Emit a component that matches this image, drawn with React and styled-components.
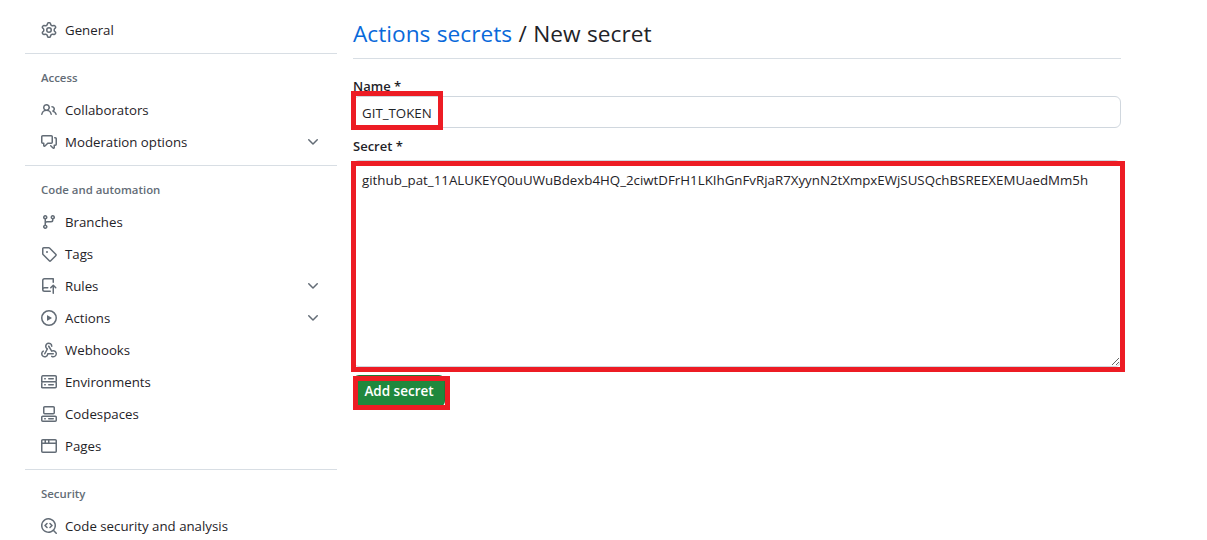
import React from 'react'
import styled, { createGlobalStyle } from 'styled-components'

const FONT = '"Open Sans", "Noto Sans", "Liberation Sans", sans-serif'

const GlobalStyle = createGlobalStyle`
  html, body {
    margin: 0;
    height: 540px;
    overflow: hidden;
    background: #fff;
  }
  body {
    font-family: ${ FONT };
    font-size: 14px;
    color: #1f2328;
  }
`

const Page = styled.div`
  display: grid;
  grid-template-columns: 312px 768px;
  column-gap: 16px;
  padding-left: 25px;
  height: 540px;
  overflow: hidden;
`

const Sidebar = styled.nav`
  display: flex;
  flex-direction: column;
  padding-top: 14px;
`

const NavItem = styled.div`
  display: grid;
  grid-template-columns: 16px 1fr 16px;
  column-gap: 8px;
  align-items: center;
  height: 32px;
  padding: 0 16px;
  flex: none;
  font-size: 13.25px;
  color: #1f2328;
`

const IconSvg = styled.svg`
  display: block;
  fill: #636c76;
`

const Divider = styled.div`
  flex: none;
  height: 1px;
  background: #d8dee4;
  margin: 7px 0 8px;
`

const SectionTitle = styled.div`
  flex: none;
  height: 32px;
  line-height: 32px;
  padding: 0 16px;
  font-size: 11.4px;
  font-weight: 600;
  color: #636c76;
`

const Main = styled.main`
  display: flex;
  flex-direction: column;
`

const Title = styled.h2`
  margin: 0;
  height: 59px;
  box-sizing: border-box;
  padding-top: 16px;
  font-size: 22.7px;
  line-height: 36px;
  font-weight: 400;
  word-spacing: 0.5px;
  border-bottom: 1px solid #d8dee4;
  color: #1f2328;
`

const TitleLink = styled.span`
  color: #0969da;
`

const Label = styled.label`
  display: block;
  font-size: 13px;
  font-weight: 600;
  line-height: 20px;
  color: #1f2328;
`

const NameLabel = styled(Label)`
  margin-top: 17px;
`

const SecretLabel = styled(Label)`
  margin-top: 8px;
  height: 24px;
`

const Annotated = styled.div`
  position: relative;
`

// hand-drawn red boxes that lie over the form
const RedBox = styled.div`
  position: absolute;
  left: ${ ({ $left }) => $left }px;
  top: ${ ({ $top }) => $top }px;
  width: ${ ({ $width }) => $width }px;
  height: ${ ({ $height }) => $height }px;
  box-sizing: border-box;
  border: 5px solid #ed1c24;
  pointer-events: none;
`

const TextInput = styled.input`
  display: block;
  box-sizing: border-box;
  width: 100%;
  height: 32px;
  padding: 1px 8px 0;
  border: 1px solid #d0d7de;
  border-radius: 6px;
  outline: none;
  font-family: ${ FONT };
  font-size: 13.3px;
  color: #1f2328;
  background: #fff;
`

const SecretArea = styled.textarea`
  display: block;
  box-sizing: border-box;
  width: 100%;
  height: 207px;
  padding: 9px 8px;
  margin: 0;
  border: 1px solid #d0d7de;
  border-radius: 6px;
  outline: none;
  font-family: ${ FONT };
  font-size: 13.3px;
  line-height: 20px;
  color: #1f2328;
  background: #fff;
`

const SubmitButton = styled.button`
  display: block;
  margin-top: 8px;
  box-sizing: border-box;
  width: 92px;
  height: 32px;
  padding: 0;
  border: 1px solid rgba(31, 35, 40, 0.15);
  border-radius: 6px;
  background: #1f883d;
  color: #fff;
  font-family: ${ FONT };
  font-size: 13.5px;
  font-weight: 600;
`

// octicons, 16px versions
const paths = {
  gear: 'M8 0a8.2 8.2 0 0 1 .701.031C9.444.095 9.99.645 10.16 1.29l.288 1.107c.018.066.079.158.212.224.231.114.454.243.668.386.123.082.233.09.299.071l1.103-.303c.644-.176 1.392.021 1.82.63.27.385.506.792.704 1.218.315.675.111 1.422-.364 1.891l-.814.806c-.049.048-.098.147-.088.294.016.257.016.515 0 .772-.01.147.038.246.088.294l.814.806c.475.469.679 1.216.364 1.891a7.977 7.977 0 0 1-.704 1.217c-.428.61-1.176.807-1.82.63l-1.102-.302c-.067-.019-.177-.011-.3.071a5.909 5.909 0 0 1-.668.386c-.133.066-.194.158-.211.224l-.29 1.106c-.168.646-.715 1.196-1.458 1.26a8.006 8.006 0 0 1-1.402 0c-.743-.064-1.289-.614-1.458-1.26l-.289-1.106c-.018-.066-.079-.158-.212-.224a5.738 5.738 0 0 1-.668-.386c-.123-.082-.233-.09-.299-.071l-1.103.303c-.644.176-1.392-.021-1.82-.63a8.12 8.12 0 0 1-.704-1.218c-.315-.675-.111-1.422.363-1.891l.815-.806c.05-.048.098-.147.088-.294a6.214 6.214 0 0 1 0-.772c.01-.147-.038-.246-.088-.294l-.815-.806C.635 6.045.431 5.298.746 4.623a7.92 7.92 0 0 1 .704-1.217c.428-.61 1.176-.807 1.82-.63l1.102.302c.067.019.177.011.3-.071.214-.143.437-.272.668-.386.133-.066.194-.158.211-.224l.29-1.106C6.009.645 6.556.095 7.299.03 7.53.01 7.764 0 8 0Zm-.571 1.525c-.036.003-.108.036-.137.146l-.289 1.105c-.147.561-.549.967-.998 1.189-.173.086-.34.183-.5.29-.417.278-.97.423-1.529.27l-1.103-.303c-.109-.03-.175.016-.195.045-.22.312-.412.644-.573.99-.014.031-.021.11.059.19l.815.806c.411.406.562.957.53 1.456a4.709 4.709 0 0 0 0 .582c.032.499-.119 1.05-.53 1.456l-.815.806c-.081.08-.073.159-.059.19.162.346.353.677.573.989.02.03.085.076.195.046l1.102-.303c.56-.153 1.113-.008 1.53.27.161.107.328.204.501.29.447.222.85.629.997 1.189l.289 1.105c.029.109.101.143.137.146a6.6 6.6 0 0 0 1.142 0c.036-.003.108-.036.137-.146l.289-1.105c.147-.561.549-.967.998-1.189.173-.086.34-.183.5-.29.417-.278.97-.423 1.529-.27l1.103.303c.109.029.175-.016.195-.045.22-.313.411-.644.573-.99.014-.031.021-.11-.059-.19l-.815-.806c-.411-.406-.562-.957-.53-1.456a4.709 4.709 0 0 0 0-.582c-.032-.499.119-1.05.53-1.456l.815-.806c.081-.08.073-.159.059-.19a6.464 6.464 0 0 0-.573-.989c-.02-.03-.085-.076-.195-.046l-1.102.303c-.56.153-1.113.008-1.53-.27a4.44 4.44 0 0 0-.501-.29c-.447-.222-.85-.629-.997-1.189l-.289-1.105c-.029-.11-.101-.143-.137-.146a6.6 6.6 0 0 0-1.142 0ZM11 8a3 3 0 1 1-6 0 3 3 0 0 1 6 0ZM9.5 8a1.5 1.5 0 1 0-3.001.001A1.5 1.5 0 0 0 9.5 8Z',
  people: 'M2 5.5a3.5 3.5 0 1 1 5.898 2.549 5.508 5.508 0 0 1 3.034 4.084.75.75 0 1 1-1.482.235 4 4 0 0 0-7.9 0 .75.75 0 0 1-1.482-.236A5.507 5.507 0 0 1 3.102 8.05 3.493 3.493 0 0 1 2 5.5ZM11 4a3.001 3.001 0 0 1 2.22 5.018 5.01 5.01 0 0 1 2.56 3.012.749.749 0 0 1-.885.954.752.752 0 0 1-.549-.514 3.507 3.507 0 0 0-2.522-2.372.75.75 0 0 1-.574-.73v-.352a.75.75 0 0 1 .416-.672A1.5 1.5 0 0 0 11 5.5.75.75 0 0 1 11 4Zm-5.5-.5a2 2 0 1 0-.001 3.999A2 2 0 0 0 5.5 3.5Z',
  discussion: 'M1.75 1h8.5c.966 0 1.75.784 1.75 1.75v5.5A1.75 1.75 0 0 1 10.25 10H7.061l-2.574 2.573A1.458 1.458 0 0 1 2 11.543V10h-.25A1.75 1.75 0 0 1 0 8.25v-5.5C0 1.784.784 1 1.75 1ZM1.5 2.75v5.5c0 .138.112.25.25.25h1a.75.75 0 0 1 .75.75v2.19l2.72-2.72a.749.749 0 0 1 .53-.22h3.5a.25.25 0 0 0 .25-.25v-5.5a.25.25 0 0 0-.25-.25h-8.5a.25.25 0 0 0-.25.25Zm13 2a.25.25 0 0 0-.25-.25h-.5a.75.75 0 0 1 0-1.5h.5c.966 0 1.75.784 1.75 1.75v5.5A1.75 1.75 0 0 1 14.25 12H14v1.543a1.458 1.458 0 0 1-2.487 1.03L9.22 12.28a.749.749 0 0 1 .326-1.275.749.749 0 0 1 .734.215l2.22 2.22v-2.19a.75.75 0 0 1 .75-.75h1a.25.25 0 0 0 .25-.25Z',
  branch: 'M9.5 3.25a2.25 2.25 0 1 1 3 2.122V6A2.5 2.5 0 0 1 10 8.5H6a1 1 0 0 0-1 1v1.128a2.251 2.251 0 1 1-1.5 0V5.372a2.25 2.25 0 1 1 1.5 0v1.836A2.493 2.493 0 0 1 6 7h4a1 1 0 0 0 1-1v-.628A2.25 2.25 0 0 1 9.5 3.25Zm-6 0a.75.75 0 1 0 1.5 0 .75.75 0 0 0-1.5 0Zm8.25-.75a.75.75 0 1 0 0 1.5.75.75 0 0 0 0-1.5ZM4.25 12a.75.75 0 1 0 0 1.5.75.75 0 0 0 0-1.5Z',
  tag: 'M1 7.775V2.75C1 1.784 1.784 1 2.75 1h5.025c.464 0 .91.184 1.238.513l6.25 6.25a1.75 1.75 0 0 1 0 2.474l-5.026 5.026a1.75 1.75 0 0 1-2.474 0l-6.25-6.25A1.752 1.752 0 0 1 1 7.775Zm1.5 0c0 .066.026.13.073.177l6.25 6.25a.25.25 0 0 0 .354 0l5.025-5.025a.25.25 0 0 0 0-.354l-6.25-6.25a.25.25 0 0 0-.177-.073H2.75a.25.25 0 0 0-.25.25ZM6 5a1 1 0 1 1 0 2 1 1 0 0 1 0-2Z',
  repoPush: 'M1 2.5A2.5 2.5 0 0 1 3.5 0h8.75a.75.75 0 0 1 .75.75v3.5a.75.75 0 0 1-1.5 0V1.5h-8a1 1 0 0 0-1 1v6.708A2.493 2.493 0 0 1 3.5 9h3.25a.75.75 0 0 1 0 1.5H3.5a1 1 0 0 0 0 2h5.75a.75.75 0 0 1 0 1.5H3.5A2.5 2.5 0 0 1 1 11.5Zm13.23 7.79h-.001l-1.224-1.224v6.184a.75.75 0 0 1-1.5 0V9.066L10.28 10.29a.75.75 0 0 1-1.06-1.061l2.505-2.504a.75.75 0 0 1 1.06 0L15.29 9.23a.751.751 0 0 1-.018 1.042.751.751 0 0 1-1.042.018Z',
  play: 'M8 0a8 8 0 1 1 0 16A8 8 0 0 1 8 0ZM1.5 8a6.5 6.5 0 1 0 13 0 6.5 6.5 0 0 0-13 0Zm4.879-2.773 4.264 2.559a.25.25 0 0 1 0 .428l-4.264 2.559A.25.25 0 0 1 6 10.559V5.442a.25.25 0 0 1 .379-.215Z',
  webhook: 'M5.5 4.25a2.25 2.25 0 0 1 4.5 0 .75.75 0 0 0 1.5 0 3.75 3.75 0 1 0-6.14 2.889l-2.272 4.258a.75.75 0 0 0 1.324.706L7 7.25a.75.75 0 0 0-.309-1.015A2.25 2.25 0 0 1 5.5 4.25Z M7.364 3.607a.75.75 0 0 1 1.03.257l2.608 4.349a3.75 3.75 0 1 1-.628 6.785.75.75 0 0 1 .752-1.299 2.25 2.25 0 1 0-.033-3.88.75.75 0 0 1-1.03-.256L7.107 4.636a.75.75 0 0 1 .257-1.03Z M2.9 8.776A.75.75 0 0 1 2.625 9.8 2.25 2.25 0 1 0 6 11.75a.75.75 0 0 1 .75-.751h5.5a.75.75 0 0 1 0 1.5H7.425a3.751 3.751 0 1 1-5.55-3.998.75.75 0 0 1 1.024.274Z',
  server: 'M1.75 1h12.5c.966 0 1.75.784 1.75 1.75v4c0 .372-.116.717-.314 1 .198.283.314.628.314 1v4a1.75 1.75 0 0 1-1.75 1.75H1.75A1.75 1.75 0 0 1 0 13.75v-4c0-.372.116-.717.314-1a1.739 1.739 0 0 1-.314-1v-4C0 1.784.784 1 1.75 1ZM1.5 2.75v4c0 .138.112.25.25.25h12.5a.25.25 0 0 0 .25-.25v-4a.25.25 0 0 0-.25-.25H1.75a.25.25 0 0 0-.25.25Zm.25 5.75a.25.25 0 0 0-.25.25v4c0 .138.112.25.25.25h12.5a.25.25 0 0 0 .25-.25v-4a.25.25 0 0 0-.25-.25ZM7 4.75A.75.75 0 0 1 7.75 4h4.5a.75.75 0 0 1 0 1.5h-4.5A.75.75 0 0 1 7 4.75ZM7.75 10h4.5a.75.75 0 0 1 0 1.5h-4.5a.75.75 0 0 1 0-1.5ZM3 4.75A.75.75 0 0 1 3.75 4h.5a.75.75 0 0 1 0 1.5h-.5A.75.75 0 0 1 3 4.75ZM3.75 10h.5a.75.75 0 0 1 0 1.5h-.5a.75.75 0 0 1 0-1.5Z',
  codespaces: 'M0 11.25c0-.966.784-1.75 1.75-1.75h12.5c.966 0 1.75.784 1.75 1.75v3A1.75 1.75 0 0 1 14.25 16H1.75A1.75 1.75 0 0 1 0 14.25Zm2-9.5C2 .784 2.784 0 3.75 0h8.5C13.216 0 14 .784 14 1.75v5a1.75 1.75 0 0 1-1.75 1.75h-8.5A1.75 1.75 0 0 1 2 6.75Zm1.75-.25a.25.25 0 0 0-.25.25v5c0 .138.112.25.25.25h8.5a.25.25 0 0 0 .25-.25v-5a.25.25 0 0 0-.25-.25Zm-2 9.5a.25.25 0 0 0-.25.25v3c0 .138.112.25.25.25h12.5a.25.25 0 0 0 .25-.25v-3a.25.25 0 0 0-.25-.25Z M7 12.75a.75.75 0 0 1 .75-.75h4.5a.75.75 0 0 1 0 1.5h-4.5a.75.75 0 0 1-.75-.75Zm-4 0a.75.75 0 0 1 .75-.75h.5a.75.75 0 0 1 0 1.5h-.5a.75.75 0 0 1-.75-.75Z',
  browser: 'M0 2.75C0 1.784.784 1 1.75 1h12.5c.966 0 1.75.784 1.75 1.75v10.5A1.75 1.75 0 0 1 14.25 15H1.75A1.75 1.75 0 0 1 0 13.25ZM14.5 6h-13v7.25c0 .138.112.25.25.25h12.5a.25.25 0 0 0 .25-.25Zm-6-3.5v2h6V2.75a.25.25 0 0 0-.25-.25ZM5 2.5v2h2v-2Zm-3.25 0a.25.25 0 0 0-.25.25V4.5h2v-2Z',
  codescan: 'M8.47 4.97a.75.75 0 0 0 0 1.06L9.94 7.5 8.47 8.97a.75.75 0 1 0 1.06 1.06l2-2a.75.75 0 0 0 0-1.06l-2-2a.75.75 0 0 0-1.06 0ZM6.53 6.03a.75.75 0 0 0-1.06-1.06l-2 2a.75.75 0 0 0 0 1.06l2 2a.75.75 0 1 0 1.06-1.06L5.06 7.5l1.47-1.47Z M12.246 13.307a7.501 7.501 0 1 1 1.06-1.06l2.474 2.473a.749.749 0 0 1-.326 1.275.749.749 0 0 1-.734-.215ZM1.5 7.5a6 6 0 0 0 10.386 4.1.75.75 0 0 1 .1-.114A6 6 0 1 0 1.5 7.5Z',
  chevronDown: 'M12.78 5.22a.749.749 0 0 1 0 1.06l-4.25 4.25a.749.749 0 0 1-1.06 0L3.22 6.28a.749.749 0 1 1 1.06-1.06L8 8.939l3.72-3.719a.749.749 0 0 1 1.06 0Z'
}

const Octicon = ({ name }) => (
  <IconSvg width="16" height="16" viewBox="0 0 16 16">
    <path fillRule="evenodd" d={ paths[name] } />
  </IconSvg>
)

const topNav = [
  { icon: 'people', label: 'Collaborators' },
  { icon: 'discussion', label: 'Moderation options', more: true }
]

const codeNav = [
  { icon: 'branch', label: 'Branches' },
  { icon: 'tag', label: 'Tags' },
  { icon: 'repoPush', label: 'Rules', more: true },
  { icon: 'play', label: 'Actions', more: true },
  { icon: 'webhook', label: 'Webhooks' },
  { icon: 'server', label: 'Environments' },
  { icon: 'codespaces', label: 'Codespaces' },
  { icon: 'browser', label: 'Pages' }
]

const Item = ({ icon, label, more }) => (
  <NavItem>
    <Octicon name={ icon } />
    <span>{ label }</span>
    { more && <Octicon name="chevronDown" /> }
  </NavItem>
)

const SECRET = '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'

const App = () => (
  <>
    <GlobalStyle />
    <Page>
      <Sidebar>
        <Item icon="gear" label="General" />
        <Divider />
        <SectionTitle>Access</SectionTitle>
        { topNav.map((item) => <Item key={ item.label } { ...item } />) }
        <Divider />
        <SectionTitle>Code and automation</SectionTitle>
        { codeNav.map((item) => <Item key={ item.label } { ...item } />) }
        <Divider />
        <SectionTitle>Security</SectionTitle>
        <Item icon="codescan" label="Code security and analysis" />
      </Sidebar>
      <Main>
        <Title><TitleLink>Actions secrets</TitleLink> / New secret</Title>
        <NameLabel>Name *</NameLabel>
        <Annotated>
          <TextInput readOnly value="GIT_TOKEN" />
          <RedBox $left={ -2 } $top={ -5 } $width={ 92 } $height={ 39 } />
        </Annotated>
        <SecretLabel>Secret *</SecretLabel>
        <Annotated>
          <SecretArea readOnly value={ SECRET } />
          <RedBox $left={ -2 } $top={ 1 } $width={ 774 } $height={ 211 } />
        </Annotated>
        <Annotated>
          <SubmitButton>Add secret</SubmitButton>
          <RedBox $left={ 0 } $top={ 9 } $width={ 97 } $height={ 34 } />
        </Annotated>
      </Main>
    </Page>
  </>
)

export default App
